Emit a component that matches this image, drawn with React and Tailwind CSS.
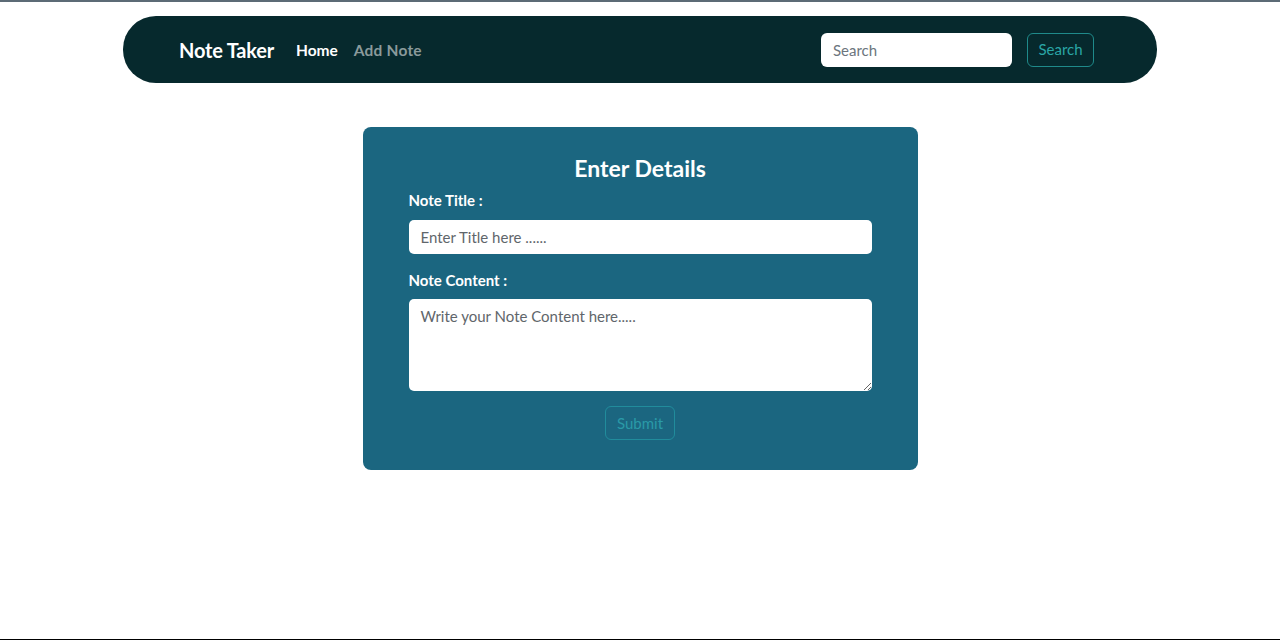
export default function App() {
  return (
    <div
      className="w-[1280px] h-[640px] bg-white flex flex-col border-t-2 border-t-[#5c6b76] border-b border-b-black"
      style={{ fontFamily: "Lato, 'Open Sans', sans-serif" }}
    >
      <div className="px-[123px] pt-[14px]">
        <nav className="h-[67px] bg-[#06292d] rounded-[33px] flex items-center pl-[56px] pr-[63px]">
          <span className="text-white text-[20px] font-bold tracking-[-0.2px]">Note Taker</span>
          <span className="ml-[22px] mt-[2px] text-white text-[15.5px] font-bold">Home</span>
          <span className="ml-[16px] mt-[2px] text-[#8a9a9b] text-[15.5px] font-bold tracking-[0.2px]">Add Note</span>
          <div className="flex-1" />
          <input
            className="w-[191px] h-[34px] bg-white rounded-[6px] px-3 text-[15px] text-gray-800 placeholder:text-[#6c757d] outline-none"
            placeholder="Search"
          />
          <button className="ml-[15px] w-[67px] h-[34px] rounded-[6px] border border-[#1f8a8a] text-[#2aa6a6] text-[15px]">
            Search
          </button>
        </nav>
      </div>
      <div className="flex justify-center pt-[44px]">
        <div className="w-[555px] h-[343px] bg-[#1b6680] rounded-[8px] px-[46px] pt-[26px] flex flex-col">
          <h2 className="text-white text-[23px] font-bold text-center leading-[30px]">Enter Details</h2>
          <label className="text-white text-[15px] font-bold mt-[6px] leading-[22px]">Note Title :</label>
          <input
            className="mt-[9px] h-[34px] bg-white rounded-[5px] px-3 text-[15px] placeholder:text-[#5f666b] outline-none"
            placeholder="Enter Title here ......"
          />
          <label className="text-white text-[15px] font-bold mt-[15px] leading-[22px]">Note Content :</label>
          <textarea
            className="mt-[8px] h-[92px] bg-white rounded-[5px] px-3 py-[6px] text-[15px] placeholder:text-[#5f666b] outline-none resize-y"
            placeholder="Write your Note Content here....."
          />
          <div className="flex justify-center mt-[15px]">
            <button className="w-[70px] h-[34px] rounded-[6px] border border-[#218c9c] text-[#2a9aa8] text-[15px]">
              Submit
            </button>
          </div>
        </div>
      </div>
    </div>
  );
}
